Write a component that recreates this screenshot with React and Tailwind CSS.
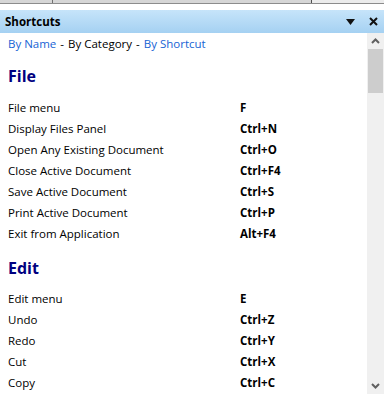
import React from "react";

const file = [
  ["File menu", "F"],
  ["Display Files Panel", "Ctrl+N"],
  ["Open Any Existing Document", "Ctrl+O"],
  ["Close Active Document", "Ctrl+F4"],
  ["Save Active Document", "Ctrl+S"],
  ["Print Active Document", "Ctrl+P"],
  ["Exit from Application", "Alt+F4"],
];
const edit = [
  ["Edit menu", "E"],
  ["Undo", "Ctrl+Z"],
  ["Redo", "Ctrl+Y"],
  ["Cut", "Ctrl+X"],
  ["Copy", "Ctrl+C"],
];

function Rows({ items }) {
  return (
    <div className="flex flex-col">
      {items.map(([a, b]) => (
        <div key={a} className="flex h-[21px] items-center">
          <div className="w-[232px]">{a}</div>
          <div className="font-bold">{b}</div>
        </div>
      ))}
    </div>
  );
}

export default function App() {
  return (
    <div
      className="w-[384px] h-[394px] overflow-hidden flex flex-col bg-white text-black text-[11.5px]"
      style={{ fontFamily: '"Open Sans", "Noto Sans", sans-serif' }}
    >
      <div className="h-[4px] flex bg-[#d6d6d6] border-b border-[#8c8c8c]">
        <div className="w-[53px] border-r border-[#707070]" />
        <div className="w-[259px] border-r border-[#505050]" />
        <div className="flex-1 bg-[#ececec]" />
      </div>
      <div className="h-[6px] bg-white" />
      <div className="h-[23px] flex items-center bg-gradient-to-b from-[#c6e4fa] to-[#a5d1f2] pl-[5px] pr-[5px]">
        <div className="font-bold flex-1 text-[11.5px]">Shortcuts</div>
        <svg width="9" height="6" viewBox="0 0 9 6" className="mr-[14px]">
          <path d="M0 0H9L4.5 6Z" fill="#111" />
        </svg>
        <svg width="9" height="9" viewBox="0 0 9 9" className="mr-[1px]">
          <path d="M1 1L8 8M8 1L1 8" stroke="#111" strokeWidth="2" />
        </svg>
      </div>
      <div className="flex flex-1 min-h-0">
        <div className="flex-1 pl-[8px] flex flex-col">
          <div className="mt-[3px] h-[16px] flex items-center">
            <span className="text-[#1764d4]">By Name</span>
            <span className="mx-[4px]">-</span>
            <span>By Category</span>
            <span className="mx-[4px]">-</span>
            <span className="text-[#1764d4]">By Shortcut</span>
          </div>
          <div className="mt-[14px] h-[20px] flex items-center text-[16px] font-bold text-[#000080]">File</div>
          <div className="mt-[11px]">
            <Rows items={file} />
          </div>
          <div className="mt-[14px] h-[20px] flex items-center text-[16px] font-bold text-[#000080]">Edit</div>
          <div className="mt-[10px]">
            <Rows items={edit} />
          </div>
        </div>
        <div className="w-[17px] bg-[#f0f0f0] flex flex-col items-center">
          <div className="h-[16px] flex items-center justify-center">
            <svg width="9" height="6" viewBox="0 0 9 6">
              <path d="M1 5L4.5 1.5L8 5" stroke="#606060" strokeWidth="2" fill="none" />
            </svg>
          </div>
          <div className="w-[15px] h-[44px] bg-[#cdcdcd]" />
          <div className="flex-1" />
          <div className="h-[17px] flex items-center justify-center">
            <svg width="9" height="6" viewBox="0 0 9 6">
              <path d="M1 1L4.5 4.5L8 1" stroke="#606060" strokeWidth="2" fill="none" />
            </svg>
          </div>
        </div>
      </div>
    </div>
  );
}
